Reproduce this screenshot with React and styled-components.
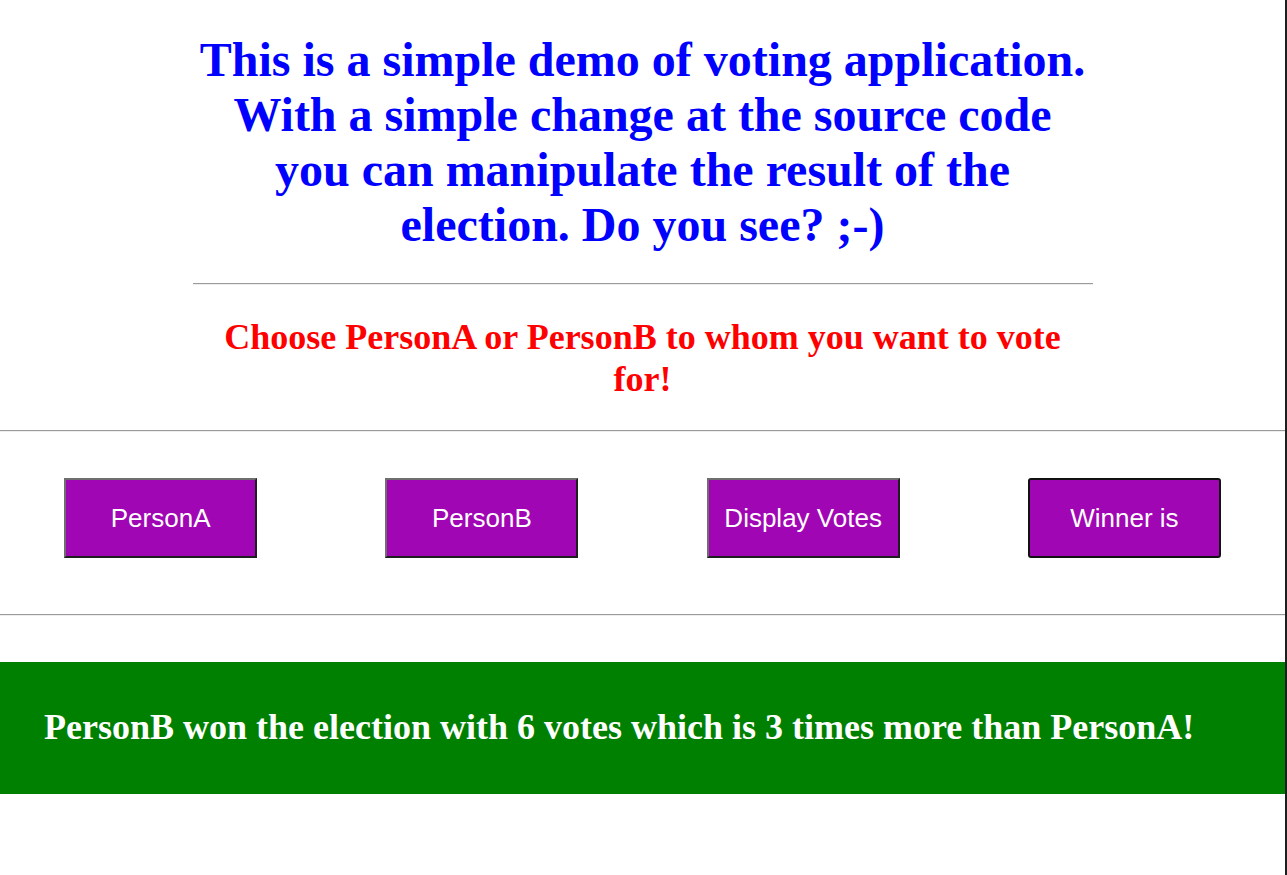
import React from 'react'
import styled, { createGlobalStyle } from 'styled-components'

const GlobalStyle = createGlobalStyle`
  body {
    margin: 0;
    background: #fff;
    font-family: "Liberation Serif", "Times New Roman", serif;
  }
`

const Page = styled.div`
  width: 1285px;
  min-height: 100vh;
  border-right: 2px solid #1e1e1e;
`

const Intro = styled.div`
  width: 900px;
  margin: 0 auto;
  text-align: center;
`

const Title = styled.h1`
  margin: 0;
  padding-top: 32px;
  font-size: 48px;
  line-height: 55px;
  font-weight: bold;
  color: #0000ff;
`

const Rule = styled.hr`
  height: 0;
  margin: ${(p) => p.$margin || '0'};
  border: none;
  border-top: 1px solid #9a9a9a;
  border-bottom: 1px solid #eeeeee;
`

const Prompt = styled.h2`
  margin: 31px 0 0;
  font-size: 36px;
  line-height: 42px;
  font-weight: bold;
  color: #ff0000;
`

const ButtonRow = styled.div`
  display: grid;
  grid-template-columns: repeat(4, 1fr);
  justify-items: center;
  padding: 46px 0 56px;
`

const VoteButton = styled.button`
  width: 193px;
  height: 80px;
  box-sizing: border-box;
  background: #a106b4;
  color: #fff;
  font-family: "Liberation Sans", Arial, sans-serif;
  font-size: 26px;
  border: 2px solid;
  border-color: ${(p) => (p.$active ? '#111' : '#6e6e6e #1e1e1e #1e1e1e #6e6e6e')};
  border-radius: ${(p) => (p.$active ? '3px' : '0')};
  cursor: pointer;
`

const Result = styled.div`
  margin-top: 46px;
  background: #008000;
  color: #fff;
  font-size: 36px;
  line-height: 42px;
  font-weight: bold;
  padding: 44px 44px 46px;
`

const buttons = ['PersonA', 'PersonB', 'Display Votes', 'Winner is']

const App = () => {
  return (
    <Page>
      <GlobalStyle />
      <Intro>
        <Title>
          This is a simple demo of voting application. With a simple change at the source code
          you can manipulate the result of the election. Do you see? ;-)
        </Title>
        <Rule $margin="31px 0 0" />
        <Prompt>Choose PersonA or PersonB to whom you want to vote for!</Prompt>
      </Intro>
      <Rule $margin="30px 0 0" />
      <ButtonRow>
        {buttons.map((b, i) => (
          <VoteButton key={b} $active={i === 3}>{b}</VoteButton>
        ))}
      </ButtonRow>
      <Rule />
      <Result>PersonB won the election with 6 votes which is 3 times more than PersonA!</Result>
    </Page>
  )
}

export default App
